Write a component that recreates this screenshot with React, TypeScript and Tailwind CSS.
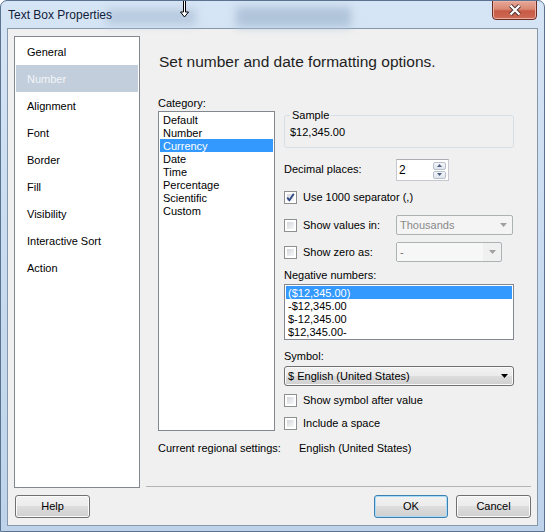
import React from "react";

const navItems = [
  "General",
  "Number",
  "Alignment",
  "Font",
  "Border",
  "Fill",
  "Visibility",
  "Interactive Sort",
  "Action",
];

const categories = [
  "Default",
  "Number",
  "Currency",
  "Date",
  "Time",
  "Percentage",
  "Scientific",
  "Custom",
];

const negatives = ["($12,345.00)", "-$12,345.00", "$-12,345.00", "$12,345.00-"];

function CheckBox({ checked }: { checked?: boolean }) {
  return (
    <div className="relative w-[13px] h-[13px] shrink-0 border border-[#8e8f8f] bg-white p-[2px]">
      <div className="w-full h-full bg-gradient-to-br from-[#d3d6db] to-[#f8f8f8]" />
      {checked && (
        <svg className="absolute left-0 top-0" width="11" height="11" viewBox="0 0 11 11">
          <path d="M2.2 5.6 L4.4 8.2 L8.8 1.8" fill="none" stroke="#2f4a86" strokeWidth="1.9" />
        </svg>
      )}
    </div>
  );
}

function Arrow({ color }: { color: string }) {
  return (
    <svg width="7" height="4" viewBox="0 0 7 4">
      <path d="M0 0 H7 L3.5 4 Z" fill={color} />
    </svg>
  );
}

function Button({ label, primary }: { label: string; primary?: boolean }) {
  return (
    <div
      className={
        "h-[23px] rounded-[3px] border flex items-center justify-center text-[11px] bg-[linear-gradient(to_bottom,#f2f2f2_0%,#ebebeb_50%,#dddddd_50%,#cfcfcf_100%)] " +
        (primary
          ? "w-[74px] border-[#3c7fb1] shadow-[inset_0_0_0_1px_#a9dcf6]"
          : "w-[75px] border-[#707070] shadow-[inset_0_0_0_1px_#fbfbfb]")
      }
    >
      {label}
    </div>
  );
}

export default function App() {
  return (
    <div className="relative w-[545px] h-[532px] overflow-hidden rounded-t-[7px] border border-[#5a7391] bg-gradient-to-b from-[#d6e5f5] via-[#c8dbf0] to-[#bed3ea] font-['Liberation_Sans',sans-serif] text-black">
      {/* title bar */}
      <div className="relative h-[27px] flex items-center pl-[7px] pt-[1px] text-[12px] text-[#10203a]">
        <div className="absolute left-[105px] top-[8px] w-[90px] h-[16px] bg-[#b9cbe0] blur-[4px]" />
        <div className="absolute left-[235px] top-[6px] w-[115px] h-[20px] bg-[#b0c4da] blur-[4px]" />
        <span className="relative">Text Box Properties</span>
        <svg className="absolute left-[178px] top-[-1px]" width="11" height="19" viewBox="0 0 11 19">
          <path d="M4.5 0 H6.5 V12 H9.5 L5.5 17 L1.5 12 H4.5 Z" fill="#ffffff" stroke="#000000" strokeWidth="1" />
        </svg>
        <div className="absolute right-[7px] top-[-1px] w-[45px] h-[20px] rounded-b-[4px] border border-[#6b2a22] bg-[linear-gradient(to_bottom,#e6a898_0%,#d98873_45%,#c85a45_55%,#cc6a55_100%)] shadow-[inset_0_0_0_1px_#eeb0a2] flex items-center justify-center">
          <svg width="14" height="12" viewBox="0 0 14 12">
            <path d="M2.5 1.5 L11.5 10.5 M11.5 1.5 L2.5 10.5" stroke="#4a3434" strokeWidth="4" />
            <path d="M2.5 1.5 L11.5 10.5 M11.5 1.5 L2.5 10.5" stroke="#ffffff" strokeWidth="2.2" />
          </svg>
        </div>
      </div>

      {/* client area */}
      <div className="mx-[6px] h-[498px] border border-[#8497ab] bg-[#f0f0f0] flex flex-col text-[11px]">
        <div className="flex pl-[6px] pt-[7px]">
          <div className="w-[126px] h-[452px] shrink-0 border border-[#828790] bg-white pt-[1px]">
            {navItems.map((item) => (
              <div
                key={item}
                className={
                  "h-[27px] mx-[1px] flex items-center pl-[11px] pt-[2px] " +
                  (item === "Number" ? "bg-[#c2cedb] text-[#f2f5f9]" : "")
                }
              >
                {item}
              </div>
            ))}
          </div>

          <div className="flex-1 h-[452px] flex flex-col">
            <div className="pl-[18px]">
              <div className="mt-[16px] ml-[1px] text-[15.5px] leading-[20px] text-[#1e1e1e]">
                Set number and date formatting options.
              </div>

              <div className="mt-[23px] grid grid-cols-[117px_230px] gap-x-[9px]">
                {/* category column */}
                <div className="flex flex-col">
                  <div className="leading-[15px] pt-[1px]">Category:</div>
                  <div className="h-[320px] border border-[#828790] bg-white pt-[1px] px-[1px]">
                    {categories.map((c) => (
                      <div
                        key={c}
                        className={
                          "h-[13px] leading-[12px] pt-[1px] pl-[3px] " +
                          (c === "Currency" ? "bg-[#3399ff] text-white" : "")
                        }
                      >
                        {c}
                      </div>
                    ))}
                  </div>
                </div>

                {/* options column */}
                <div className="flex flex-col">
                  <fieldset className="mt-[13px] rounded-[3px] border border-[#d5dfe5] pb-[7px]">
                    <legend className="ml-[5px] px-[2px] leading-[15px]">Sample</legend>
                    <div className="pl-[5px] pt-[2px] leading-[15px]">$12,345.00</div>
                  </fieldset>

                  <div className="mt-[11px] flex items-center h-[22px]">
                    <div className="w-[112px] -mt-[2px]">Decimal places:</div>
                    <div className="w-[53px] h-[22px] border border-[#c5c8cf] border-t-[#abadb3] bg-white flex items-center justify-between pl-[2px] pr-[2px]">
                      <span className="text-[12px]">2</span>
                      <div className="flex flex-col gap-[1px] w-[13px]">
                        <div className="h-[8px] rounded-[2px] border border-[#b8c0cc] bg-gradient-to-b from-[#f4f6f9] to-[#dfe4ec] flex items-center justify-center">
                          <svg width="5" height="3" viewBox="0 0 5 3">
                            <path d="M0 3 H5 L2.5 0 Z" fill="#4e5f82" />
                          </svg>
                        </div>
                        <div className="h-[8px] rounded-[2px] border border-[#b8c0cc] bg-gradient-to-b from-[#f4f6f9] to-[#dfe4ec] flex items-center justify-center">
                          <svg width="5" height="3" viewBox="0 0 5 3">
                            <path d="M0 0 H5 L2.5 3 Z" fill="#4e5f82" />
                          </svg>
                        </div>
                      </div>
                    </div>
                  </div>

                  <div className="mt-[10px] flex items-center h-[13px] gap-[6px]">
                    <CheckBox checked />
                    <span>Use 1000 separator (,)</span>
                  </div>

                  <div className="mt-[11px] flex items-center h-[20px]">
                    <div className="w-[112px] flex items-center gap-[6px]">
                      <CheckBox />
                      <span>Show values in:</span>
                    </div>
                    <div className="w-[117px] h-[20px] rounded-[2px] border border-[#adb2b5] bg-[#f4f4f4] flex items-center justify-between pl-[3px] pr-[5px] text-[#8a8a8a]">
                      <span>Thousands</span>
                      <Arrow color="#a0a0a0" />
                    </div>
                  </div>

                  <div className="mt-[7px] flex items-center h-[20px]">
                    <div className="w-[112px] flex items-center gap-[6px]">
                      <CheckBox />
                      <span>Show zero as:</span>
                    </div>
                    <div className="w-[106px] h-[20px] rounded-[2px] border border-[#adb2b5] bg-[#f0f0f0] flex items-center">
                      <div className="w-[86px] h-full bg-[#f7f7f7] flex items-center pl-[3px] text-[#6d6d6d]">-</div>
                      <div className="flex-1 flex items-center justify-center">
                        <Arrow color="#a0a0a0" />
                      </div>
                    </div>
                  </div>

                  <div className="mt-[6px] leading-[15px]">Negative numbers:</div>
                  <div className="mt-[1px] h-[56px] border border-[#828790] bg-white pt-[1px] px-[1px]">
                    {negatives.map((n, i) => (
                      <div
                        key={n}
                        className={
                          "h-[13px] leading-[12px] pt-[1px] pl-[2px] " +
                          (i === 0 ? "bg-[#3399ff] text-white" : "")
                        }
                      >
                        {n}
                      </div>
                    ))}
                  </div>

                  <div className="mt-[9px] leading-[15px]">Symbol:</div>
                  <div className="mt-[2px] h-[20px] rounded-[3px] border border-[#707070] bg-[linear-gradient(to_bottom,#f2f2f2_0%,#ebebeb_50%,#dddddd_50%,#cfcfcf_100%)] shadow-[inset_0_0_0_1px_#fbfbfb] flex items-center justify-between pl-[3px] pr-[5px]">
                    <span>$ English (United States)</span>
                    <Arrow color="#000000" />
                  </div>

                  <div className="mt-[8px] flex items-center h-[13px] gap-[6px]">
                    <CheckBox />
                    <span>Show symbol after value</span>
                  </div>

                  <div className="mt-[10px] flex items-center h-[13px] gap-[6px]">
                    <CheckBox />
                    <span>Include a space</span>
                  </div>
                </div>
              </div>

              <div className="mt-[9px] flex leading-[15px] pt-[1px]">
                <div className="w-[141px]">Current regional settings:</div>
                <div>English (United States)</div>
              </div>
            </div>

            <div className="mt-auto mx-[6px] mb-[1px] h-px bg-[#b4b4b4]" />
          </div>
        </div>

        <div className="mt-[7px] flex pl-[7px] pr-[6px]">
          <Button label="Help" />
          <div className="flex-1" />
          <div className="mr-[8px]">
            <Button label="OK" primary />
          </div>
          <Button label="Cancel" />
        </div>
      </div>
    </div>
  );
}
